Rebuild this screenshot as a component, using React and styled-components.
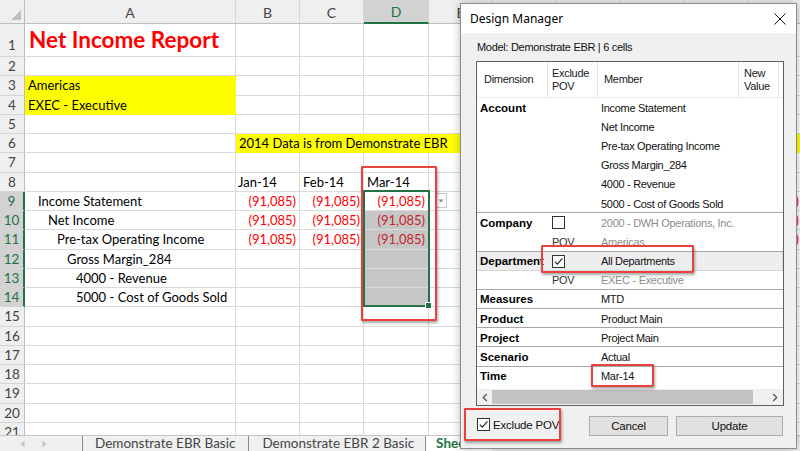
import React from 'react';
import styled, { createGlobalStyle } from 'styled-components';

const GREEN = '#217346';
const RED_NOTE = '#e8413f';

const GlobalStyle = createGlobalStyle`
  html, body {
    margin: 0;
    padding: 0;
    background: #fff;
    overflow: hidden;
  }
`;

const Page = styled.div`
  position: relative;
  width: 800px;
  height: 451px;
  overflow: hidden;
  display: flex;
  flex-direction: column;
  font-family: Lato, 'Liberation Sans', sans-serif;
  color: #000;
`;

/* ---------- sheet ---------- */

const Grid = styled.div`
  position: relative;
  flex: 1;
  overflow: hidden;
`;

const GridRow = styled.div`
  display: flex;
  height: ${(p) => p.$h}px;
`;

const Corner = styled.div`
  position: relative;
  flex: none;
  width: 25px;
  box-sizing: border-box;
  background: #efefef;
  border-right: 1px solid #bdbdbd;
  border-bottom: 1px solid #bdbdbd;

  &::after {
    content: '';
    position: absolute;
    right: 3px;
    bottom: 3px;
    border-style: solid;
    border-width: 0 0 10px 10px;
    border-color: transparent transparent #bfbfbf transparent;
  }
`;

const ColHead = styled.div`
  flex: none;
  width: ${(p) => p.$w}px;
  box-sizing: border-box;
  display: flex;
  align-items: center;
  justify-content: center;
  padding-top: 1px;
  font-size: 14px;
  color: ${(p) => (p.$active ? GREEN : '#444')};
  background: ${(p) => (p.$active ? '#d2d2d2' : '#efefef')};
  border-right: 1px solid #d4d4d4;
  border-bottom: ${(p) => (p.$active ? `2px solid ${GREEN}` : '1px solid #bdbdbd')};
`;

const RowHead = styled.div`
  flex: none;
  width: 25px;
  box-sizing: border-box;
  display: flex;
  align-items: ${(p) => (p.$tall ? 'flex-end' : 'center')};
  justify-content: center;
  padding-bottom: ${(p) => (p.$tall ? '3px' : '0')};
  font-size: 13.5px;
  color: ${(p) => (p.$active ? GREEN : '#444')};
  background: ${(p) => (p.$active ? '#d2d2d2' : '#efefef')};
  border-bottom: 1px solid #d4d4d4;
  border-right: ${(p) => (p.$active ? `2px solid ${GREEN}` : '1px solid #bdbdbd')};
`;

const Cell = styled.div`
  flex: none;
  width: ${(p) => p.$w}px;
  box-sizing: border-box;
  display: flex;
  align-items: ${(p) => (p.$title ? 'flex-end' : 'center')};
  justify-content: ${(p) => (p.$right ? 'flex-end' : 'flex-start')};
  padding: ${(p) => (p.$title ? '0 0 3px 4px' : `0 3px 0 ${p.$indent ?? 3}px`)};
  white-space: nowrap;
  overflow: hidden;
  font-size: ${(p) => (p.$title ? '22.5px' : '13px')};
  font-weight: ${(p) => (p.$title ? 700 : 400)};
  color: ${(p) => p.$color || '#000'};
  background: ${(p) => p.$fill || '#fff'};
  border-right: 1px solid ${(p) => (p.$fill && p.$fill !== '#c6c6c6' ? p.$fill : '#dadada')};
  border-bottom: 1px solid ${(p) => (p.$fill && p.$fill !== '#c6c6c6' ? p.$fill : '#dadada')};
`;

const Selection = styled.div`
  position: absolute;
  left: 363px;
  top: 190px;
  width: 67px;
  height: 117px;
  box-sizing: border-box;
  border: 2px solid ${GREEN};

  &::after {
    content: '';
    position: absolute;
    right: -4px;
    bottom: -4px;
    width: 5px;
    height: 5px;
    background: ${GREEN};
    border: 1px solid #fff;
  }
`;

const DropButton = styled.div`
  position: absolute;
  left: 435px;
  top: 193px;
  width: 12px;
  height: 15px;
  box-sizing: border-box;
  background: #fff;
  border: 1px solid #c8c8c8;
  display: flex;
  align-items: center;
  justify-content: center;
`;

const Note = styled.div`
  position: absolute;
  left: ${(p) => p.$x}px;
  top: ${(p) => p.$y}px;
  width: ${(p) => p.$w}px;
  height: ${(p) => p.$h}px;
  box-sizing: border-box;
  border: 2px solid ${RED_NOTE};
  border-radius: 1px;
  box-shadow: 1px 2px 3px rgba(0, 0, 0, 0.35);
  pointer-events: none;
`;

const TabBar = styled.div`
  flex: none;
  height: 16px;
  box-sizing: border-box;
  display: flex;
  align-items: flex-start;
  overflow: hidden;
  background: #f0f0f0;
  border-top: 1px solid #c6c6c6;
  font-size: 13.5px;
  color: #444;
`;

const TabNav = styled.div`
  width: 82px;
  display: flex;
  gap: 17px;
  padding: 4px 0 0 20px;
  box-sizing: border-box;
`;

const Tab = styled.div`
  display: flex;
  align-items: center;
  height: 15px;
  line-height: 15px;
  padding: 0 ${(p) => p.$pr}px 0 ${(p) => p.$pl}px;
  border-left: 1px solid #8a8a8a;
  white-space: nowrap;
  ${(p) =>
    p.$active &&
    `
    background: #fff;
    color: ${GREEN};
    font-weight: 700;
  `}
`;

/* ---------- dialog ---------- */

const Dialog = styled.div`
  position: absolute;
  left: 460px;
  top: 3px;
  width: 337px;
  height: 446px;
  box-sizing: border-box;
  display: flex;
  flex-direction: column;
  background: #f0f0f0;
  border: 1px solid #8c8c8c;
  box-shadow: 0 0 8px rgba(0, 0, 0, 0.28);
  font-family: 'Liberation Sans', Arial, sans-serif;
  font-size: 11px;
  letter-spacing: -0.3px;
`;

const TitleBar = styled.div`
  flex: none;
  height: 29px;
  display: flex;
  align-items: center;
  justify-content: space-between;
  padding: 0 10px 0 9px;
  background: #fff;
  font-family: 'Noto Sans', 'Open Sans', sans-serif;
  font-size: 12px;
  letter-spacing: 0;
  color: #000;
`;

const DialogBody = styled.div`
  flex: 1;
  display: flex;
  flex-direction: column;
  padding: 0 12px 0 15px;
`;

const ModelLine = styled.div`
  height: 14px;
  line-height: 14px;
  margin: 7px 0 7px 1px;
  color: #111;
`;

const ListBox = styled.div`
  height: 345px;
  box-sizing: border-box;
  display: flex;
  flex-direction: column;
  background: #fff;
  border: 1px solid #5f5f5f;
  overflow: hidden;
`;

const ListHead = styled.div`
  flex: none;
  display: flex;
  height: 35px;
  border-bottom: 1px solid #ececec;
`;

const HeadCell = styled.div`
  flex: none;
  width: ${(p) => p.$w}px;
  box-sizing: border-box;
  display: flex;
  align-items: center;
  padding-left: ${(p) => p.$pl}px;
  line-height: 13px;
  color: #1a1a1a;
  border-right: 1px solid #e3e3e3;
`;

const Group = styled.div`
  border-top: ${(p) => (p.$first ? 'none' : '1px solid #a8a8a8')};
  margin-top: ${(p) => (p.$first ? '0' : '-1px')};
  position: relative;
`;

const ListRow = styled.div`
  display: flex;
  align-items: center;
  height: 19.2px;
  background: ${(p) => (p.$selected ? '#eeeeee' : 'transparent')};
  box-shadow: ${(p) => (p.$selected ? 'inset 0 -1px 0 #d6d6d6, inset -1px 0 0 #d6d6d6' : 'none')};
`;

const DimCell = styled.div`
  flex: none;
  width: 69px;
  margin-right: 2px;
  padding-left: 3px;
  box-sizing: border-box;
  overflow: hidden;
  white-space: nowrap;
  font-weight: 700;
  font-size: 11.5px;
  letter-spacing: 0;
`;

const ExclCell = styled.div`
  flex: none;
  width: 50px;
  padding-left: 4px;
  box-sizing: border-box;
  display: flex;
  align-items: center;
  color: #333;
`;

const MemberCell = styled.div`
  flex: 1;
  padding-left: 3px;
  white-space: nowrap;
  color: ${(p) => (p.$muted ? '#8d8d8d' : '#111')};
`;

const Filler = styled.div`
  flex: 1;
`;

const HScroll = styled.div`
  flex: none;
  height: 16px;
  display: flex;
  background: #f0f0f0;
`;

const ScrollArrow = styled.div`
  flex: none;
  width: ${(p) => p.$w}px;
  display: flex;
  align-items: center;
  justify-content: center;
`;

const Track = styled.div`
  flex: 1;
  display: flex;
  align-items: stretch;
  padding: 1px 0;
`;

const Thumb = styled.div`
  width: 261px;
  background: #c2c2c2;
`;

const Box = styled.span`
  flex: none;
  width: 13px;
  height: 13px;
  box-sizing: border-box;
  display: inline-flex;
  align-items: center;
  justify-content: center;
  background: #fff;
  border: 1px solid #333;
`;

const Footer = styled.div`
  flex: 1;
  display: flex;
  align-items: flex-start;
  padding-top: 10px;
`;

const CheckLabel = styled.label`
  display: flex;
  align-items: center;
  gap: 3px;
  margin: 2px 0 0 1px;
  font-size: 11.5px;
  letter-spacing: -0.2px;
  color: #111;
`;

const Buttons = styled.div`
  margin-left: auto;
  display: flex;
  gap: 8px;
  margin-right: 1px;
`;

const Button = styled.button`
  width: ${(p) => p.$w}px;
  height: 20px;
  padding: 0;
  background: #e1e1e1;
  border: 1px solid #adadad;
  font-family: 'Liberation Sans', Arial, sans-serif;
  font-size: 11.5px;
  letter-spacing: -0.2px;
  color: #111;
`;

/* ---------- data ---------- */

const COLS = [
  { id: 'A', w: 211 },
  { id: 'B', w: 64 },
  { id: 'C', w: 64 },
  { id: 'D', w: 65 },
  { id: 'E', w: 64 },
  { id: 'F', w: 64 },
  { id: 'G', w: 64 },
  { id: 'H', w: 64 },
  { id: 'I', w: 64 },
  { id: 'J', w: 54 },
  { id: 'K', w: 64 },
];

const YELLOW = '#ffff00';
const VAL = { text: '(91,085)', right: true, color: '#ff0000' };
const SEL_VAL = { text: '(91,085)', right: true, color: '#c8232a', fill: '#c6c6c6' };
const SEL = { fill: '#c6c6c6' };

const ROWS = [
  { n: 1, h: 33, cells: { A: { text: 'Net Income Report', title: true, color: '#ff0000' } } },
  { n: 2 },
  { n: 3, cells: { A: { text: 'Americas', fill: YELLOW } } },
  { n: 4, cells: { A: { text: 'EXEC - Executive', fill: YELLOW } } },
  { n: 5 },
  { n: 6, span: { from: 'B', text: '2014 Data is from Demonstrate EBR', fill: YELLOW } },
  { n: 7 },
  {
    n: 8,
    cells: {
      B: { text: 'Jan-14', indent: 2 },
      C: { text: 'Feb-14', indent: 3 },
      D: { text: 'Mar-14', indent: 3 },
    },
  },
  { n: 9, active: true, cells: { A: { text: 'Income Statement', indent: 13 }, B: VAL, C: VAL, D: VAL, J: VAL } },
  { n: 10, active: true, cells: { A: { text: 'Net Income', indent: 23 }, B: VAL, C: VAL, D: SEL_VAL, J: VAL } },
  { n: 11, active: true, cells: { A: { text: 'Pre-tax Operating Income', indent: 32 }, B: VAL, C: VAL, D: SEL_VAL, J: VAL } },
  { n: 12, active: true, cells: { A: { text: 'Gross Margin_284', indent: 42 }, D: SEL } },
  { n: 13, active: true, cells: { A: { text: '4000 - Revenue', indent: 51 }, D: SEL } },
  { n: 14, active: true, cells: { A: { text: '5000 - Cost of Goods Sold', indent: 51 }, D: SEL } },
  { n: 15 },
  { n: 16 },
  { n: 17 },
  { n: 18 },
  { n: 19 },
  { n: 20 },
  { n: 21 },
];

const GROUPS = [
  [
    { dim: 'Account', member: 'Income Statement' },
    { member: 'Net Income' },
    { member: 'Pre-tax Operating Income' },
    { member: 'Gross Margin_284' },
    { member: '4000 - Revenue' },
    { member: '5000 - Cost of Goods Sold' },
  ],
  [
    { dim: 'Company', check: false, member: '2000 - DWH Operations, Inc.', muted: true },
    { pov: true, member: 'Americas', muted: true },
  ],
  [
    { dim: 'Department', check: true, member: 'All Departments', selected: true },
    { pov: true, member: 'EXEC - Executive', muted: true },
  ],
  [{ dim: 'Measures', member: 'MTD' }],
  [{ dim: 'Product', member: 'Product Main' }],
  [{ dim: 'Project', member: 'Project Main' }],
  [{ dim: 'Scenario', member: 'Actual' }],
  [{ dim: 'Time', member: 'Mar-14' }],
];

/* ---------- parts ---------- */

function Check({ checked }) {
  return (
    <Box>
      {checked && (
        <svg width='11' height='11' viewBox='0 0 11 11'>
          <path d='M1.8 5.6L4.3 8.2L9.4 2.4' fill='none' stroke='#222' strokeWidth='1.1' />
        </svg>
      )}
    </Box>
  );
}

function Chevron({ dir }) {
  return (
    <svg width='6' height='9' viewBox='0 0 6 9'>
      <path
        d={dir === 'left' ? 'M4.8 1L1.3 4.5L4.8 8' : 'M1.2 1L4.7 4.5L1.2 8'}
        fill='none'
        stroke='#555'
        strokeWidth='1.3'
      />
    </svg>
  );
}

function SheetRow({ row }) {
  const h = row.h || 19.25;
  const cells = row.cells || {};
  const spanIndex = row.span ? COLS.findIndex((c) => c.id === row.span.from) : -1;
  return (
    <GridRow $h={h}>
      <RowHead $active={row.active} $tall={!!row.h}>
        {row.n}
      </RowHead>
      {spanIndex >= 0 ? (
        <>
          {COLS.slice(0, spanIndex).map((c) => (
            <Cell key={c.id} $w={c.w} />
          ))}
          <Cell $w={COLS.slice(spanIndex).reduce((s, c) => s + c.w, 0)} $fill={row.span.fill}>
            {row.span.text}
          </Cell>
        </>
      ) : (
        COLS.map((c) => {
          const d = cells[c.id] || {};
          return (
            <Cell
              key={c.id}
              $w={c.w}
              $fill={d.fill}
              $color={d.color}
              $right={d.right}
              $indent={d.indent}
              $title={d.title}
            >
              {d.text}
            </Cell>
          );
        })
      )}
    </GridRow>
  );
}

function Sheet() {
  return (
    <Grid>
      <GridRow $h={24}>
        <Corner />
        {COLS.map((c) => (
          <ColHead key={c.id} $w={c.w} $active={c.id === 'D'}>
            {c.id}
          </ColHead>
        ))}
      </GridRow>
      {ROWS.map((r) => (
        <SheetRow key={r.n} row={r} />
      ))}
      <Selection />
      <DropButton>
        <svg width='6' height='4' viewBox='0 0 6 4'>
          <path d='M0.5 0.5H5.5L3 3.5Z' fill='#8a8a8a' />
        </svg>
      </DropButton>
      <Note $x={361} $y={166} $w={76} $h={155} />
    </Grid>
  );
}

function Tabs() {
  return (
    <TabBar>
      <TabNav>
        <svg width='5' height='8' viewBox='0 0 5 8'>
          <path d='M4.5 0.5V7.5L0.5 4Z' fill='#c4c4c4' />
        </svg>
        <svg width='5' height='8' viewBox='0 0 5 8'>
          <path d='M0.5 0.5V7.5L4.5 4Z' fill='#c4c4c4' />
        </svg>
      </TabNav>
      <Tab $pl={12} $pr={13}>Demonstrate EBR Basic</Tab>
      <Tab $pl={13} $pr={11}>Demonstrate EBR 2 Basic</Tab>
      <Tab $pl={10} $pr={14} $active>
        Sheet1
      </Tab>
    </TabBar>
  );
}

function DesignManager() {
  return (
    <Dialog>
      <TitleBar>
        <span>Design Manager</span>
        <svg width='12' height='12' viewBox='0 0 12 12'>
          <path d='M0.5 0.5L11.5 11.5M11.5 0.5L0.5 11.5' stroke='#111' strokeWidth='1' />
        </svg>
      </TitleBar>
      <DialogBody>
        <ModelLine>Model: Demonstrate EBR | 6 cells</ModelLine>
        <ListBox>
          <ListHead>
            <HeadCell $w={71} $pl={7}>Dimension</HeadCell>
            <HeadCell $w={50} $pl={4}>
              Exclude
              <br />
              POV
            </HeadCell>
            <HeadCell $w={141} $pl={6}>Member</HeadCell>
            <HeadCell $w={40} $pl={5}>
              New
              <br />
              Value
            </HeadCell>
          </ListHead>
          {GROUPS.map((g, gi) => (
            <Group key={gi} $first={gi === 0}>
              {g.map((r, ri) => (
                <ListRow key={ri} $selected={r.selected}>
                  <DimCell>{r.dim}</DimCell>
                  <ExclCell>
                    {r.check !== undefined && <Check checked={r.check} />}
                    {r.pov && 'POV'}
                  </ExclCell>
                  <MemberCell $muted={r.muted}>{r.member}</MemberCell>
                </ListRow>
              ))}
            </Group>
          ))}
          <Filler />
          <HScroll>
            <ScrollArrow $w={15}>
              <Chevron dir='left' />
            </ScrollArrow>
            <Track>
              <Thumb />
            </Track>
            <ScrollArrow $w={17}>
              <Chevron dir='right' />
            </ScrollArrow>
          </HScroll>
        </ListBox>
        <Footer>
          <CheckLabel>
            <Check checked />
            Exclude POV
          </CheckLabel>
          <Buttons>
            <Button $w={79}>Cancel</Button>
            <Button $w={107}>Update</Button>
          </Buttons>
        </Footer>
      </DialogBody>
      <Note $x={80} $y={241} $w={153} $h={28} />
      <Note $x={130} $y={360} $w={63} $h={23} />
      <Note $x={3} $y={404} $w={97} $h={33} />
    </Dialog>
  );
}

export default function App() {
  return (
    <Page>
      <GlobalStyle />
      <Sheet />
      <Tabs />
      <DesignManager />
    </Page>
  );
}
